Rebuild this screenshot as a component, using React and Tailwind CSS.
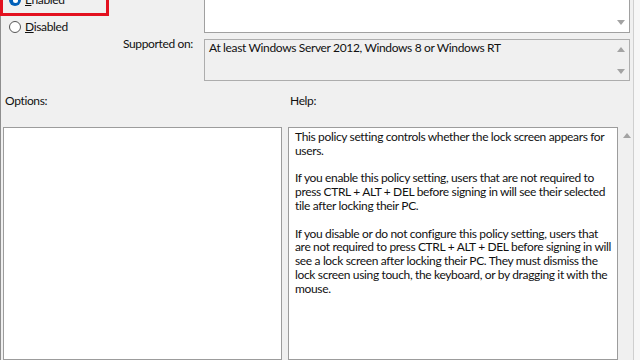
import React from 'react';

function Arrow({ up }) {
  return (
    <svg width="8" height="5" viewBox="0 0 8 5" className="block">
      <path d={up ? 'M0 5 L4 0 L8 5 Z' : 'M0 0 L8 0 L4 5 Z'} fill="#a3a3a3" />
    </svg>
  );
}

function Radio({ checked }) {
  if (checked) {
    return (
      <span className="w-[12px] h-[12px] rounded-full bg-[#005fb8] flex items-center justify-center shrink-0">
        <span className="w-[5px] h-[5px] rounded-full bg-white" />
      </span>
    );
  }
  return <span className="w-[12px] h-[12px] rounded-full border border-[#555] bg-white shrink-0" />;
}

const help = [
  ['This policy setting controls whether the lock screen appears for', 'users.'],
  [
    'If you enable this policy setting, users that are not required to',
    'press CTRL + ALT + DEL before signing in will see their selected',
    'tile after locking their PC.',
  ],
  [
    'If you disable or do not configure this policy setting, users that',
    'are not required to press CTRL + ALT + DEL before signing in will',
    'see a lock screen after locking their PC. They must dismiss the',
    'lock screen using touch, the keyboard, or by dragging it with the',
    'mouse.',
  ],
];

export default function App() {
  return (
    <div className="w-[640px] h-[360px] overflow-hidden bg-[#f0f0f0] flex font-['Lato',sans-serif] text-[12px] tracking-[-0.35px] text-[#111]">
      <div className="w-[634px] h-full border-l border-r border-l-[#8e8e8e] border-r-[#cfcfcf] flex flex-col">
        {/* top: state + supported on */}
        <div className="flex -mt-[10px]">
          <div className="w-[203px] flex flex-col">
            <div className="-ml-px w-[109px] h-[26px] border-[3px] border-[#e3111f]">
              <div className="h-[14px] flex items-center ml-[6px] gap-[4px]">
                <Radio checked />
                <span className="leading-[14px]"><span className="underline">E</span>nabled</span>
              </div>
            </div>
            <div className="h-[14px] mt-[4px] flex items-center ml-[8px] gap-[4px]">
              <Radio />
              <span className="leading-[14px]"><span className="underline">D</span>isabled</span>
            </div>
            <div className="h-[14px] mt-[3px] flex items-center justify-end pr-[11px] leading-[14px]">
              Supported on:
            </div>
          </div>
          <div className="w-[426px] flex flex-col">
            <div className="h-[43px] bg-white border border-[#a0a0a0] flex justify-end">
              <div className="w-[17px] flex flex-col justify-end items-center pb-[7px]">
                <Arrow />
              </div>
            </div>
            <div className="h-[42px] mt-[6px] bg-[#f0f0f0] border border-[#adadad] flex">
              <div className="flex-1 pl-[4px] pt-[1px] leading-[14px] whitespace-nowrap">
                At least Windows Server 2012, Windows 8 or Windows RT
              </div>
              <div className="w-[17px] flex flex-col justify-between items-center pt-[7px] pb-[6px]">
                <Arrow up />
                <Arrow />
              </div>
            </div>
          </div>
        </div>

        {/* labels */}
        <div className="flex mt-[13px] h-[14px] leading-[14px] pl-[2px]">
          <div className="w-[285px] pl-[2px]">Options:</div>
          <div className="pl-[2px]">Help:</div>
        </div>

        {/* options + help */}
        <div className="flex mt-[19px] pl-[2px] h-[260px]">
          <div className="w-[279px] h-full bg-white border border-[#9c9c9c]" />
          <div className="w-[330px] h-full ml-[6px] bg-white border border-[#9c9c9c] pl-[6px] pt-[2px] leading-[13.8px] whitespace-nowrap">
            {help.map((para, i) => (
              <div key={i} className={i > 0 ? 'mt-[13.8px]' : ''}>
                {para.map((line) => (
                  <div key={line}>{line}</div>
                ))}
              </div>
            ))}
          </div>
          <div className="w-[15px] h-full flex flex-col items-center pt-[6px] pl-[2px]">
            <Arrow up />
          </div>
        </div>
      </div>
      <div className="flex-1 bg-[#f7f7f7]" />
    </div>
  );
}
